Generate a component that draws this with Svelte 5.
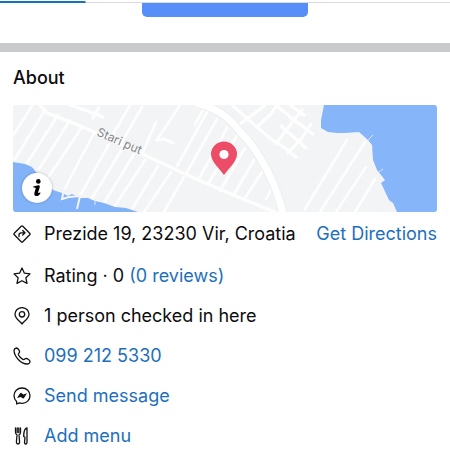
<script>
  const address = 'Prezide 19, 23230 Vir, Croatia';
  const phone = '099 212 5330';

  // [x1, y1, x2, y2] of the side streets
  const streets = [
    [19, 1, 1, 29], [32, 5, 2, 54], [45, 10, 14, 58], [57, 15, 26, 64],
    [69, 22, 34, 74], [81, 28, 51, 85], [96, 39, 67, 91], [109, 44, 78, 95],
    [121, 49, 91, 98], [132, 55, 102, 101], [145, 61, 119, 104], [158, 67, 131, 107],
    [171, 72, 151, 107], [117, 0, 99, 31], [129, 2, 109, 37], [143, 17, 130, 47],
    [167, 0, 144, 35], [194, 7, 164, 61], [204, 14, 174, 67], [214, 23, 187, 72],
    [224, 31, 195, 79], [232, 43, 207, 86], [241, 55, 220, 91], [249, 67, 232, 93],
    [259, 83, 253, 94], [190, 5, 182, 19], [334, 35, 292, 104], [352, 37, 307, 107],
    [353, 62, 323, 107], [362, 74, 342, 107],
  ];

  // wider streets, drawn as polylines
  const roads = [
    '27,0 34,8 70,22 127,48 170,68 204,83 237,97 262,107',
    '57,0 72,5 90,12',
    '86,2 80,13',
    '144,35 151,34 160,38',
    '219,0 238,17 258,34 272,43 283,52',
    '227,19 246,5 252,0',
    '244,22 258,9 264,0',
    '263,0 281,15 300,29',
    '277,0 291,10',
    '263,39 281,15 289,5',
    '275,48 289,33 298,19',
    '268,21 293,43',
  ];

  const piers = '51,84 49,94 56,92 67,91 64,104';
</script>

<header>
  <div class="tab"></div>
  <button class="action" aria-label="Page action"></button>
</header>

<main>
  <h2>About</h2>

  <div class="map">
    <svg viewBox="0 0 424 107" preserveAspectRatio="xMidYMid slice" role="img" aria-label="Map of {address}">
      <rect width="424" height="107" fill="#f3f4f5" />
      <g class="streets">
        {#each streets as [x1, y1, x2, y2]}
          <line {x1} {y1} {x2} {y2} />
        {/each}
      </g>
      <g class="roads">
        {#each roads as points}
          <polyline {points} />
        {/each}
      </g>

      <!-- Main road -->
      <path d="M183-2C201 2 216 12 224 23L238 39C251 57 264 82 270 109" fill="none" stroke="#eceef0" stroke-width="9" />
      <path d="M183-2C201 2 216 12 224 23L238 39C251 57 264 82 270 109" fill="none" stroke="#fff" stroke-width="7" />

      <!-- Sea -->
      <path d="M0 57 12 59 19 62 23 67 31 75 40 85 49 88 55 91 59 89 67 93 75 93 82 96 91 98 102 102 113 103 125 107H0Z" fill="#82b2f8" />
      <path d="M311 0 308 15V23L315 27 324 28 332 28 346 27 355 35 359 40 360 55 364 65 372 75 368 78 376 95 380 98 384 107H424V0Z" fill="#86b5fa" />
      <polyline points={piers} fill="none" stroke="#f3f4f6" stroke-width="2" />
      <path d="M355 35l5-5M366 67l4-3M82 96v4" stroke="#dce8f7" stroke-width="1" />

      <text class="street" transform="translate(83 30) rotate(24)">Stari put</text>

      <!-- Pin -->
      <path d="M211 70C207 64 198 57 198 49a13 12.5 0 0 1 26 0C224 57 215 64 211 70Z" fill="#ec4c66" />
      <circle cx="211" cy="49.5" r="4.6" fill="#fff" />
    </svg>
    <button class="info" aria-label="Map information">
      <svg viewBox="0 0 12 20" width="12" height="20">
        <circle cx="7.3" cy="3.4" r="2.3" />
        <path d="M2.5 8.2C4.8 8.6 6.4 6.6 8.4 7.5 9.8 8.3 7 13.5 7.2 14.8 7.5 15.7 8.8 14.2 9.4 14.7 9.8 15.4 7.7 18 5.6 18 3.2 18 3.1 16 3.5 14.4L4.7 10.3C4.6 9.5 2.3 10.3 2.2 9.1Z" />
      </svg>
    </button>
  </div>

  <ul>
    <li class="address">
      <svg class="icon" viewBox="0 0 18 18">
        <path d="M8.2 1.3Q9 .5 9.8 1.3L16.7 8.2Q17.5 9 16.7 9.8L9.8 16.7Q9 17.5 8.2 16.7L1.3 9.8Q.5 9 1.3 8.2Z" />
        <path d="M6 11.5V10Q6 7.8 8.2 7.8H11.5M9.7 5.5 12 7.8 9.7 10" />
      </svg>
      <span>{address}</span>
      <a class="directions" href="#directions">Get Directions</a>
    </li>
    <li>
      <svg class="icon" viewBox="0 0 18 18">
        <path d="M9 1 11.4 6.2 17 6.9 12.9 10.8 14 16.4 9 13.7 4 16.4 5.1 10.8 1 6.9 6.6 6.2Z" />
      </svg>
      <span>Rating · 0 <a href="#reviews">(0 reviews)</a></span>
    </li>
    <li>
      <svg class="icon" viewBox="0 0 18 18">
        <path d="M9 17C7 14.2 2 11.5 2 7.2a7 6.6 0 0 1 14 0C16 11.5 11 14.2 9 17Z" />
        <circle cx="9" cy="7.3" r="2.7" />
      </svg>
      <span>1 person checked in here</span>
    </li>
    <li>
      <svg class="icon" viewBox="0 0 18 18">
        <path d="M1 3.1C1.3 2 2.5 1 3.6 1 4.8 1.1 6.5 3.6 6.6 4.8 6.6 6 5.1 6.4 5.3 7.4 5.8 9.1 8.8 12.2 10.5 12.6 11.6 12.8 12 11.3 13.2 11.3 14.4 11.4 16.9 13.2 17 14.4 17 15.7 15.5 17 14.1 17 8 17 1 9.6 1 3.1Z" />
      </svg>
      <a href="tel:0992125330">{phone}</a>
    </li>
    <li>
      <svg class="icon" viewBox="0 0 18 18">
        <path d="M9 1C4.3 1 1 4.3 1 8.6 1 11 2 13.1 3.6 14.5L3.7 17 6.3 15.9C7.1 16.2 8 16.3 9 16.3 13.7 16.3 17 13 17 8.7 17 4.3 13.7 1 9 1Z" />
        <path class="solid" d="M4 11 7.1 6.2Q7.7 5.4 8.5 6L10.3 7.4 14 6.3 11 11.1Q10.4 11.9 9.6 11.3L7.8 9.9Z" />
      </svg>
      <a href="#message">Send message</a>
    </li>
    <li>
      <svg class="icon" viewBox="0 0 18 18">
        <path d="M2.5 1V5.2Q2.5 7.2 4 7.8L3.4 15.3Q3.5 17 5 17T6.6 15.3L6 7.8Q7.5 7.2 7.5 5.2V1M4.2 1V5.6M5.8 1V5.6" />
        <path d="M13.8 1C11.2 1.7 10.7 5 10.7 9.5L12 10.2 11.5 15.4Q11.6 17 12.7 17T14 15.4V1Z" />
      </svg>
      <a href="#menu">Add menu</a>
    </li>
  </ul>
</main>

<style>
  :global(body) {
    margin: 0;
    background: #fff;
    color: #0c0c0e;
    font-family: Inter, "Liberation Sans", sans-serif;
  }
  header {
    display: flex;
    flex-direction: column;
    align-items: center;
    height: 43px;
    border-bottom: 9px solid #c9cacc;
  }
  .tab {
    box-sizing: border-box;
    width: 100%;
    height: 3px;
    background:
      linear-gradient(#1475b8, #1475b8) 0 1px / 19% 2px no-repeat,
      linear-gradient(#dadbdd, #dadbdd) 0 2px / 100% 1px no-repeat;
  }
  .action {
    width: 37%;
    height: 14px;
    padding: 0;
    border: 0;
    border-radius: 0 0 5px 5px;
    background: #558ff7;
  }
  main {
    padding: 14px 13px 0;
  }
  h2 {
    margin: 0 0 15px;
    font-size: 18px;
    font-weight: 500;
    line-height: 24px;
  }
  .map {
    position: relative;
    height: 107px;
    overflow: hidden;
    border-radius: 3px;
  }
  .map > svg {
    display: block;
    width: 100%;
    height: 100%;
  }
  .streets,
  .roads {
    fill: none;
    stroke: #fff;
    stroke-width: 2.6;
    stroke-linecap: round;
    stroke-linejoin: round;
    opacity: 0.85;
  }
  .roads {
    stroke-width: 3.2;
  }
  .street {
    font-size: 12px;
    fill: #85878a;
  }
  .info {
    position: absolute;
    left: 9px;
    bottom: 9px;
    display: flex;
    align-items: center;
    justify-content: center;
    width: 30px;
    height: 30px;
    padding: 0;
    border: 0;
    border-radius: 50%;
    background: #fff;
    box-shadow: 0 0 3px rgba(0, 0, 0, 0.25);
  }
  ul {
    display: flex;
    flex-direction: column;
    gap: 16px;
    margin: 10px 0 0;
    padding: 0;
    list-style: none;
  }
  li {
    display: flex;
    align-items: center;
    font-size: 18px;
    line-height: 24px;
    white-space: nowrap;
  }
  .address {
    margin-bottom: 2px;
  }
  .icon {
    flex: none;
    width: 18px;
    height: 18px;
    margin-right: 13px;
    fill: none;
    stroke: #111;
    stroke-width: 1.3;
    stroke-linejoin: round;
    stroke-linecap: round;
  }
  .icon .solid {
    fill: #111;
    stroke: none;
  }
  a {
    color: #1c6fbd;
    text-decoration: none;
  }
  .directions {
    margin-left: auto;
  }
</style>
